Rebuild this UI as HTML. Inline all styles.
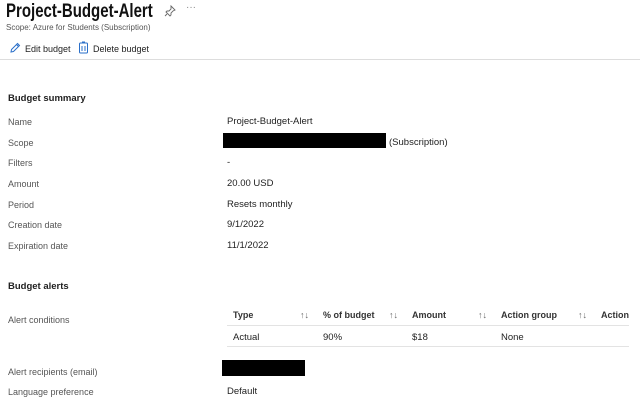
<!DOCTYPE html>
<html><head><style>
body{margin:0;width:640px;height:404px;background:#fff;font-family:"Liberation Sans",sans-serif;color:#222;position:relative;overflow:hidden}
.a{position:absolute;white-space:nowrap}
.l{font-size:9px;color:#555;left:8px}
.v{font-size:9.5px;color:#222;left:227px}
.h{font-size:9.5px;font-weight:bold;left:8px}
.th{font-size:9px;font-weight:bold;color:#333}
.td{font-size:9.5px;color:#222}
.ar{font-size:9px;color:#666}
</style></head><body>
<div class="a" style="left:6px;top:1px;font-size:19px;font-weight:bold;color:#111;transform:scaleX(0.79);transform-origin:0 0">Project-Budget-Alert</div>
<svg class="a" style="left:164px;top:5px" width="12" height="12" viewBox="0 0 12 12"><path d="M7 1l4 4-2 1-2 2 0 2-1 1-4-4 1-1 2 0 2-2z M3 9l-2 2" fill="none" stroke="#666" stroke-width="0.9"/></svg>
<div class="a" style="left:186px;top:2px;font-size:10px;color:#888">···</div>
<div class="a" style="left:6px;top:23px;font-size:8px;color:#555">Scope: Azure for Students (Subscription)</div>
<svg class="a" style="left:9px;top:42px" width="12" height="12" viewBox="0 0 12 12"><path d="M2 10l0.5-2.5L8.5 1.5l2 2-6 6z M7.5 2.5l2 2" fill="none" stroke="#2a6fc9" stroke-width="1"/></svg>
<div class="a" style="left:25px;top:44px;font-size:9px;color:#222">Edit budget</div>
<svg class="a" style="left:78px;top:41px" width="11" height="13" viewBox="0 0 11 13"><rect x="1.5" y="2" width="8" height="10" rx="1" fill="none" stroke="#2a6fc9"/><rect x="4" y="0.5" width="3" height="2" fill="#2a6fc9"/><path d="M4 5v5M7 5v5" stroke="#2a6fc9"/></svg>
<div class="a" style="left:93px;top:44px;font-size:9px;color:#222">Delete budget</div>
<div class="a" style="left:0;top:59px;width:640px;height:1px;background:#ddd"></div>

<div class="a h" style="top:93px">Budget summary</div>
<div class="a l" style="top:117px">Name</div><div class="a v" style="top:116px">Project-Budget-Alert</div>
<div class="a l" style="top:138px">Scope</div>
<div class="a" style="left:223px;top:133px;width:163px;height:15px;background:#000"></div>
<div class="a v" style="left:389px;top:137px">(Subscription)</div>
<div class="a l" style="top:158px">Filters</div><div class="a v" style="top:157px">-</div>
<div class="a l" style="top:179px">Amount</div><div class="a v" style="top:178px">20.00 USD</div>
<div class="a l" style="top:200px">Period</div><div class="a v" style="top:199px">Resets monthly</div>
<div class="a l" style="top:220px">Creation date</div><div class="a v" style="top:219px">9/1/2022</div>
<div class="a l" style="top:241px">Expiration date</div><div class="a v" style="top:240px">11/1/2022</div>

<div class="a h" style="top:281px">Budget alerts</div>
<div class="a l" style="top:315px">Alert conditions</div>
<div class="a th" style="left:233px;top:310px">Type</div><div class="a ar" style="left:300px;top:310px">↑↓</div>
<div class="a th" style="left:323px;top:310px">% of budget</div><div class="a ar" style="left:389px;top:310px">↑↓</div>
<div class="a th" style="left:412px;top:310px">Amount</div><div class="a ar" style="left:478px;top:310px">↑↓</div>
<div class="a th" style="left:501px;top:310px">Action group</div><div class="a ar" style="left:578px;top:310px">↑↓</div>
<div class="a th" style="left:601px;top:310px">Action</div>
<div class="a" style="left:227px;top:325px;width:402px;height:1px;background:#e3e3e3"></div>
<div class="a td" style="left:233px;top:332px">Actual</div>
<div class="a td" style="left:323px;top:332px">90%</div>
<div class="a td" style="left:412px;top:332px">$18</div>
<div class="a td" style="left:501px;top:332px">None</div>
<div class="a" style="left:227px;top:346px;width:402px;height:1px;background:#e3e3e3"></div>

<div class="a l" style="top:367px">Alert recipients (email)</div>
<div class="a" style="left:222px;top:360px;width:83px;height:16px;background:#000"></div>
<div class="a l" style="top:387px">Language preference</div><div class="a v" style="top:386px">Default</div>
</body></html>
